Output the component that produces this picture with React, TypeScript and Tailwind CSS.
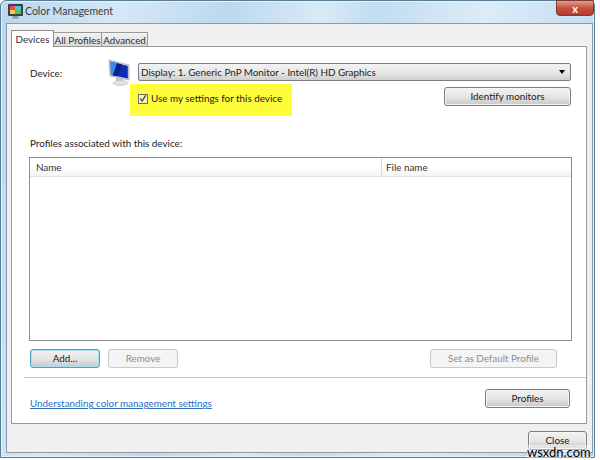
const font = "font-['Lato','Liberation_Sans',sans-serif]";

function TitleIcon() {
  return (
    <svg width="18" height="18" viewBox="0 0 18 18">
      <rect x="1" y="1" width="15" height="12" rx="1" fill="#3a3f4a" />
      <rect x="3" y="3" width="11" height="8" fill="#5a4fb0" />
      <path d="M3 3h5v4H3z" fill="#e84c5c" />
      <path d="M8 3h6v4H8z" fill="#45c7d8" />
      <path d="M3 7h5v4H3z" fill="#f0d040" />
      <path d="M8 7h6v4H8z" fill="#58c058" />
      <path d="M6 13h5l1 2.500H5z" fill="#8d929a" />
    </svg>
  );
}

function MonitorIcon() {
  return (
    <svg width="24" height="28" viewBox="0 0 24 28">
      <path d="M1 2 21 7 21 22 2 18Z" fill="#d2d6dc" stroke="#8f959e" strokeWidth="0.6" />
      <path d="M2.500 3.500 19.800 8 19.800 20.500 3 17Z" fill="#0b2fb0" />
      <path d="M2.500 3.500 9 5.200 5 17.400 3 17Z" fill="#3f86ee" />
      <path d="M9 5.200 14 6.500 9 18.200 5 17.400Z" fill="#0a1f80" />
      <path d="M8 19 15 20.500 15.500 24 8 23Z" fill="#c4c8ce" />
      <ellipse cx="12.500" cy="25" rx="7.500" ry="2.400" fill="#dfe2e6" stroke="#b5b9bf" strokeWidth="0.5" />
    </svg>
  );
}

function Btn({ label, className, disabled, focused }: { label: string; className: string; disabled?: boolean; focused?: boolean }) {
  const tone = disabled
    ? "border-[#c9c9c9] bg-[#f4f4f4] text-[#8e8e8e]"
    : focused
      ? "border-[#4f9fc4] shadow-[inset_0_0_0_1px_#a8e0f4] bg-linear-to-b from-[#f2f2f2] via-[#e6e6e6] to-[#c8c8c8] text-[#222]"
      : "border-[#7d7d7d] shadow-[inset_0_0_0_1px_#f6f6f6] bg-linear-to-b from-[#f2f2f2] via-[#e6e6e6] to-[#c8c8c8] text-[#222]";
  return (
    <div className={`flex h-[19px] items-center justify-center whitespace-nowrap rounded-[3px] border ${tone} ${className}`}>
      {label}
    </div>
  );
}

export default function App() {
  return (
    <div className={`relative h-[460px] w-[600px] overflow-hidden bg-white text-[9.850px] ${font}`}>
      <div className="flex h-[458px] w-[595px] flex-col rounded-t-[6px] border border-[#5a7d96] bg-[linear-gradient(100deg,#b9d7ee_0%,#d5e8f6_18%,#bcd8ee_34%,#d8eaf7_48%,#c2dcf0_56%,#dcecf8_72%,#c4def2_88%,#a9cfea_100%)] shadow-[inset_0_0_0_1px_#e4f1fa]">
        <div className="flex h-[22px] shrink-0 items-center pl-[6px]">
          <TitleIcon />
          <span className="text-[10.500px] text-[#3c3c3c]">Color Management</span>
          <div className="ml-auto flex h-[16px] w-[38px] -translate-y-[4px] items-center justify-center rounded-b-[4px] border border-[#7c3a34] bg-linear-to-b from-[#dc9d90] via-[#c8503e] to-[#b83a2c] text-[11px] font-bold leading-none text-white">
            x
          </div>
        </div>

        <div className="ml-[5px] flex h-[430px] w-[587px] flex-col border border-[#8d9aa6] bg-[#f0f0f0]">
          {/* tab strip */}
          <div className="ml-[4px] mt-[6px] flex h-[17px] shrink-0 items-end whitespace-nowrap text-[#333]">
            <div className="relative z-10 flex h-[17px] w-[43px] items-center justify-center border border-b-0 border-[#8f8f8f] bg-white">Devices</div>
            <div className="flex h-[15px] w-[48px] items-center justify-center border border-l-0 border-b-0 border-[#9a9a9a] bg-linear-to-b from-[#f4f4f4] to-[#d6d6d6]">All Profiles</div>
            <div className="flex h-[15px] w-[46px] items-center justify-center border border-l-0 border-b-0 border-[#9a9a9a] bg-linear-to-b from-[#f4f4f4] to-[#d6d6d6]">Advanced</div>
          </div>

          {/* tab page */}
          <div className="-mt-px ml-[4px] flex h-[378px] w-[576px] flex-col border border-[#9a9a9a] bg-white text-[#222]">
            <div className="flex pl-[18px] pr-[15px] pt-[11px]">
              <span className="mt-[8px] w-[78px]">Device:</span>
              <div className="w-[30px]"><MonitorIcon /></div>
              <div className="flex flex-1 flex-col">
                <div className="mt-[5px] flex h-[18px] items-center justify-between rounded-[2px] border border-[#7d7d7d] bg-linear-to-b from-[#f3f3f3] via-[#e8e8e8] to-[#cfcfcf] pl-[2px] pr-[5px] text-[#222]">
                  <span>Display: 1. Generic PnP Monitor - Intel(R) HD Graphics</span>
                  <span className="h-0 w-0 border-x-[3.500px] border-t-[4px] border-x-transparent border-t-black" />
                </div>
                <div className="flex items-start justify-between">
                  <div className="-ml-[8px] mt-[3px] flex h-[32px] w-[162px] items-center whitespace-nowrap bg-[#fdfd3c] pb-[3px] pl-[8px]">
                    <span className="flex h-[10px] w-[10px] items-center justify-center border border-[#6f6f6f] bg-[#f4f4c8]">
                      <svg width="9" height="9" viewBox="0 0 9 9">
                        <path d="M1.500 4.500 3.500 7.500 7.500 1" fill="none" stroke="#3a4a1c" strokeWidth="1.400" />
                      </svg>
                    </span>
                    <span className="ml-[3px] text-[#222]">Use my settings for this device</span>
                  </div>
                  <Btn label="Identify monitors" className="mt-[6px] w-[127px]" />
                </div>
              </div>
            </div>

            <p className="ml-[18px] mt-[19px] leading-[16px]">Profiles associated with this device:</p>

            <div className="ml-[17px] mt-[6px] flex h-[184px] w-[543px] flex-col border border-[#8c8c8c] bg-white">
              <div className="flex h-[19px] items-center border-b border-[#e4e4e4] bg-linear-to-b from-white via-white to-[#f1f3f6] text-[#333]">
                <span className="w-[351px] pl-[6px]">Name</span>
                <span className="h-full w-px bg-[#dcdcdc]" />
                <span className="pl-[4px]">File name</span>
              </div>
            </div>

            <div className="ml-[18px] mt-[8px] flex">
              <Btn label="Add..." className="w-[70px]" focused />
              <Btn label="Remove" className="ml-[8px] w-[70px]" disabled />
              <Btn label="Set as Default Profile" className="ml-[252px] w-[127px]" disabled />
            </div>

            <div className="ml-[12px] mt-[9px] h-px bg-[#c8c8c8]" />

            <div className="ml-[18px] mr-[16px] mt-[9px] flex items-center justify-between">
              <span className="mt-[9px] text-[#2a6fc0] underline">Understanding color management settings</span>
              <Btn label="Profiles" className="w-[85px]" />
            </div>
          </div>

          <div className="mr-[5px] mt-[7px] flex justify-end">
            <Btn label="Close" className="w-[59px]" />
          </div>
        </div>
      </div>

      <span className="absolute left-[527px] top-[445px] bg-white/40 text-[13px] leading-[14px] text-black">wsxdn.com</span>
    </div>
  );
}
